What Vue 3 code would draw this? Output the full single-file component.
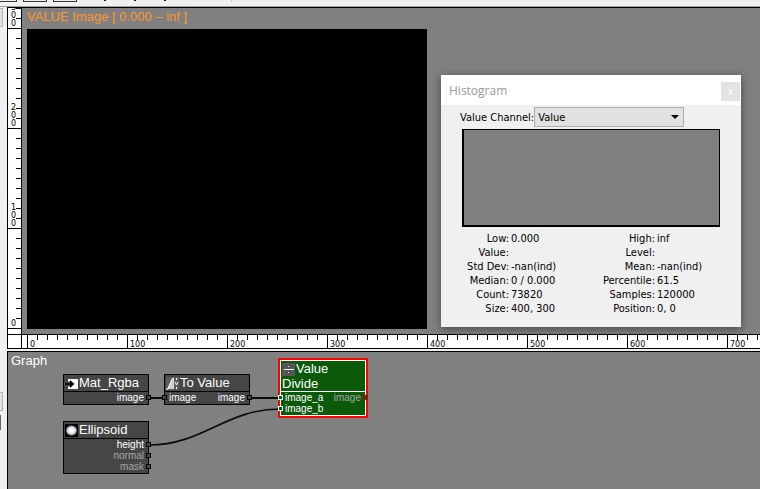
<script setup>
import { ref } from 'vue'

const channel = ref('Value')
const columnMarks = [0, 100, 200, 300, 400, 500, 600, 700]
const rowMarks = ['300', '200', '100', '0']

const stats = [
  ['Low:', '0.000', 'High:', 'inf'],
  ['Value:', '', 'Level:', ''],
  ['Std Dev:', '-nan(ind)', 'Mean:', '-nan(ind)'],
  ['Median:', '0 / 0.000', 'Percentile:', '61.5'],
  ['Count:', '73820', 'Samples:', '120000'],
  ['Size:', '400, 300', 'Position:', '0, 0'],
]

const nodes = [
  { id: 'mat', title: 'Mat_Rgba', x: 55, y: 22, rows: [{ out: 'image' }] },
  { id: 'tovalue', title: 'To Value', x: 156, y: 22, rows: [{ in: 'image', out: 'image' }] },
  { id: 'ellipsoid', title: 'Ellipsoid', x: 55, y: 69, rows: [{ out: 'height' }, { out: 'normal', dim: true }, { out: 'mask', dim: true }] },
  { id: 'divide', title: 'Value', subtitle: 'Divide', x: 272, y: 8, selected: true, rows: [{ in: 'image_a', out: 'image', dim: true }, { in: 'image_b' }] },
]
</script>

<template>
  <div class="app">
    <header class="toolbar">
      <button class="tool first" aria-label="Tool 1"></button>
      <button class="tool" aria-label="Tool 2"></button>
      <button class="tool" aria-label="Tool 3"></button>
      <span class="dots"><i></i><i></i><i></i></span>
      <span class="separator"></span>
    </header>
    <div class="main">
      <aside class="edge">
        <span class="stub top"></span>
        <span class="stub mid"></span>
        <span class="stub dark"></span>
      </aside>
      <div class="workspace">
        <section class="viewer">
          <div class="ruler-v">
            <div v-for="m in rowMarks" :key="m" class="seg-v" :class="{ cut: m === '300' }">
              <span v-for="(d, i) in m" :key="i">{{ d }}</span>
            </div>
          </div>
          <div class="view">
            <div class="view-title">VALUE Image [ 0.000 – inf ]</div>
            <div class="image"></div>
          </div>
          <div class="corner"></div>
          <div class="ruler-h">
            <div v-for="m in columnMarks" :key="m" class="seg-h">{{ m }}</div>
          </div>
        </section>
        <section class="graph">
          <h2>Graph</h2>
          <svg class="wires" width="400" height="136" viewBox="0 0 400 136" fill="none" stroke="#0a0a0a" stroke-width="1.6">
            <path d="M141 46H156M242 46H272" stroke-width="2" />
            <path d="M141 93C195 93 218 57 272 57" />
          </svg>
          <div
            v-for="n in nodes"
            :key="n.id"
            class="node"
            :class="{ selected: n.selected }"
            :style="{ left: n.x + 'px', top: n.y + 'px' }"
          >
            <div class="head">
              <svg v-if="n.id === 'mat'" class="icon" viewBox="0 0 13 13">
                <path fill="#fff" d="M3 2H13V12H3V9.500H5V4.500H3Z" />
                <path fill="#000" d="M0 6H5V3L9.500 7L5 11V8H0Z" />
              </svg>
              <svg v-else-if="n.id === 'tovalue'" class="icon" viewBox="0 0 13 13">
                <path fill="#5c5c5c" d="M0 0H13V13H0Z" />
                <path fill="#d0d0d0" d="M1 12L6 2L8 1V12Z" />
                <path stroke="#f2f2f2" fill="none" d="M0 12H2L6 2L8 1" />
                <path stroke="#fff" fill="none" d="M9 5L10.500 8L12 5M10.500 1V3M10.500 10V12" />
              </svg>
              <svg v-else-if="n.id === 'ellipsoid'" class="icon" viewBox="0 0 13 13">
                <defs>
                  <radialGradient id="ball">
                    <stop offset="0.3" stop-color="#fff" />
                    <stop offset="0.7" stop-color="#ccc" />
                    <stop offset="1" stop-color="#111" />
                  </radialGradient>
                </defs>
                <path fill="#000" d="M0 0H13V13H0Z" />
                <ellipse cx="6.500" cy="6.500" rx="6" ry="5.500" fill="url(#ball)" />
              </svg>
              <svg v-else class="icon" viewBox="0 0 13 13">
                <path fill="#555" d="M0 0H13V13H0Z" />
                <path fill="#fff" d="M2 6H12V7H2ZM6 3H7V4H6ZM6 9H7V10H6Z" />
              </svg>
              <span>{{ n.title }}</span>
            </div>
            <div v-if="n.subtitle" class="subtitle">{{ n.subtitle }}</div>
            <div class="ports">
              <div v-for="(r, i) in n.rows" :key="i" class="port-row">
                <span v-if="r.in" class="in">{{ r.in }}<i class="port"></i></span>
                <span v-if="r.out" class="out" :class="{ dim: r.dim }">{{ r.out }}<i class="port"></i></span>
              </div>
            </div>
          </div>
        </section>
      </div>
    </div>

    <section class="histogram">
      <header class="titlebar">
        <span>Histogram</span>
        <button class="close" aria-label="Close">x</button>
      </header>
      <div class="body">
        <div class="channel">
          <label for="channel">Value Channel:</label>
          <div class="select-wrap">
            <select id="channel" v-model="channel">
              <option>Value</option>
            </select>
            <svg class="arrow" viewBox="0 0 8 4"><path d="M0 0H8L4 4Z" fill="#000" /></svg>
          </div>
        </div>
        <div class="plot"></div>
        <table class="stats">
          <tbody>
            <tr v-for="s in stats" :key="s[0]">
              <th>{{ s[0] }}</th>
              <td>{{ s[1] }}</td>
              <th>{{ s[2] }}</th>
              <td>{{ s[3] }}</td>
            </tr>
          </tbody>
        </table>
      </div>
    </section>
  </div>
</template>

<style>
body {
  background: #f0f0f0;
}
</style>

<style scoped>
* {
  box-sizing: border-box;
}
.app {
  position: relative;
  display: flex;
  flex-direction: column;
  min-height: 100vh;
  overflow: hidden;
  background: #f0f0f0;
  font-family: "Liberation Sans", Arial, sans-serif;
}
.toolbar {
  display: flex;
  align-items: flex-start;
  gap: 6px;
  height: 7px;
  border-bottom: 1px solid #a0a0a0;
}
.tool {
  width: 24px;
  height: 2px;
  padding: 0;
  border: 1px solid #333;
  border-top: 0;
  border-radius: 0;
  background: #f0f0f0;
}
.tool.first {
  width: 17px;
  border-left: 0;
}
.dots {
  display: flex;
  gap: 28px;
  margin-left: 21px;
}
.dots i {
  width: 2px;
  height: 1px;
  background: #111;
}
.separator {
  width: 1px;
  height: 2px;
  margin-left: 59px;
  background: #ccc;
}
.main {
  display: flex;
  flex: 1;
}
.edge {
  flex: 0 0 7px;
}
.stub {
  display: block;
  width: 3px;
  height: 19px;
  border: 1px solid #b4b4b4;
  border-left: 0;
  background: #e1e1e1;
}
.stub.top {
  margin-top: 1px;
}
.stub.mid {
  margin-top: 365px;
}
.stub.dark {
  width: 1px;
  height: 15px;
  margin-top: 4px;
  border: 0;
  background: #666;
}
.workspace {
  display: flex;
  flex: 1;
  flex-direction: column;
  gap: 2px;
  min-width: 0;
}
.viewer {
  display: grid;
  grid-template-columns: 15px minmax(0, 1fr);
  border-top: 1px solid #000;
  border-bottom: 1px solid #000;
}
.ruler-v,
.corner {
  border: solid #000;
  border-width: 0 1px;
  background: #fff;
}
.seg-v,
.seg-h {
  font-family: "DejaVu Sans", sans-serif;
  font-size: 8px;
  line-height: 8px;
}
.seg-v {
  display: flex;
  flex-direction: column;
  justify-content: flex-end;
  height: 100px;
  padding-left: 3px;
  overflow: hidden;
  border-bottom: 1px solid #000;
  background: repeating-linear-gradient(to top, transparent 0 9px, #000 9px 10px) right / 5px 100% no-repeat;
}
.seg-v.cut {
  height: 21px;
}
.view {
  padding: 0 5px 5px;
  background: #808080;
}
.view-title {
  height: 21px;
  color: #ff962d;
  font-size: 13px;
  line-height: 18px;
}
.image {
  width: 400px;
  height: 300px;
  background: #000;
}
.corner,
.ruler-h {
  height: 14px;
  border-top: 1px solid #000;
}
.ruler-h {
  display: flex;
  padding-left: 5px;
  overflow: hidden;
  background: #fff;
}
.seg-h {
  flex: 0 0 100px;
  padding: 6px 0 0 2px;
  border-left: 1px solid #000;
  background: repeating-linear-gradient(to right, transparent 0 9px, #000 9px 10px) 0 0 / 99px 5px no-repeat;
}
.graph {
  position: relative;
  flex: 1;
  border: solid #000;
  border-width: 1px 0 0 1px;
  background: #808080;
}
.graph h2 {
  margin: 0;
  padding-left: 3px;
  color: #fff;
  font-size: 13px;
  font-weight: 400;
  line-height: 18px;
}
.wires {
  position: absolute;
  top: 0;
  left: 0;
}
.node {
  position: absolute;
  width: 86px;
  border: 1px solid #000;
  background: #464646;
  color: #fff;
}
.head {
  display: flex;
  align-items: center;
  gap: 1px;
  height: 16px;
  padding-left: 1px;
  font-size: 13px;
  line-height: 14px;
  white-space: nowrap;
}
.icon {
  flex: 0 0 13px;
  height: 13px;
}
.subtitle {
  padding-left: 1px;
  font-size: 13px;
  line-height: 14px;
}
.ports {
  padding-bottom: 1px;
  border-top: 1px solid #000;
}
.port-row {
  display: flex;
  height: 11px;
  padding: 0 4px;
  font-size: 10px;
  line-height: 11px;
}
.in,
.out {
  position: relative;
}
.out {
  margin-left: auto;
}
.dim {
  color: #a6a6a6;
}
.port {
  position: absolute;
  top: 3px;
  width: 5px;
  height: 5px;
  border: 1px solid #000;
  background: #464646;
}
.in .port {
  left: -7px;
}
.out .port {
  right: -7px;
}
.selected {
  border-color: #fff;
  outline: 2px solid #f00;
  background: #0a5a0a;
}
.selected .ports {
  border-color: #fff;
}
.selected .port {
  border-color: #fff;
  background: #0a5a0a;
}
.selected .out .port {
  border-color: #c00;
}
.histogram {
  position: absolute;
  top: 75px;
  left: 441px;
  width: 300px;
  background: #f0f0f0;
  box-shadow: 0 2px 9px rgba(0, 0, 0, 0.45);
  color: #000;
  font-family: "DejaVu Sans Condensed", "Noto Sans", sans-serif;
  font-size: 11px;
}
.titlebar {
  display: flex;
  align-items: center;
  justify-content: space-between;
  height: 30px;
  padding: 0 1px 0 8px;
  background: #fff;
  color: #999;
  font-family: "Open Sans", sans-serif;
  font-size: 12px;
}
.close {
  width: 19px;
  height: 19px;
  margin-top: 2px;
  padding: 0;
  border: 0;
  background: #e3e3e3;
  color: #fff;
  font-size: 10px;
  line-height: 17px;
}
.body {
  padding: 2px 21px 11px;
}
.channel {
  display: flex;
  align-items: center;
  margin: 0 0 2px -2px;
}
.channel label {
  flex: 0 0 74px;
  white-space: nowrap;
}
.select-wrap {
  position: relative;
  flex: 0 0 150px;
}
select {
  display: block;
  width: 100%;
  height: 20px;
  padding: 0 3px;
  border: 1px solid #adadad;
  border-radius: 0;
  appearance: none;
  background: #e1e1e1;
  color: #000;
  font: inherit;
}
.arrow {
  position: absolute;
  top: 8px;
  right: 5px;
  width: 8px;
  height: 4px;
  pointer-events: none;
}
.plot {
  height: 98px;
  border: solid #000;
  border-width: 1px 1px 2px 2px;
  background: #808080;
}
.stats {
  width: 100%;
  margin-top: 5px;
  border-collapse: collapse;
  table-layout: fixed;
}
.stats th,
.stats td {
  height: 14px;
  padding: 0;
  font-weight: 400;
  line-height: 14px;
  text-align: left;
  white-space: nowrap;
}
.stats th {
  width: 48px;
  padding-right: 1px;
  text-align: right;
}
.stats td {
  padding-left: 1px;
}
.stats td:nth-child(2) {
  width: 88px;
}
.stats th:nth-child(3) {
  width: 58px;
}
</style>
